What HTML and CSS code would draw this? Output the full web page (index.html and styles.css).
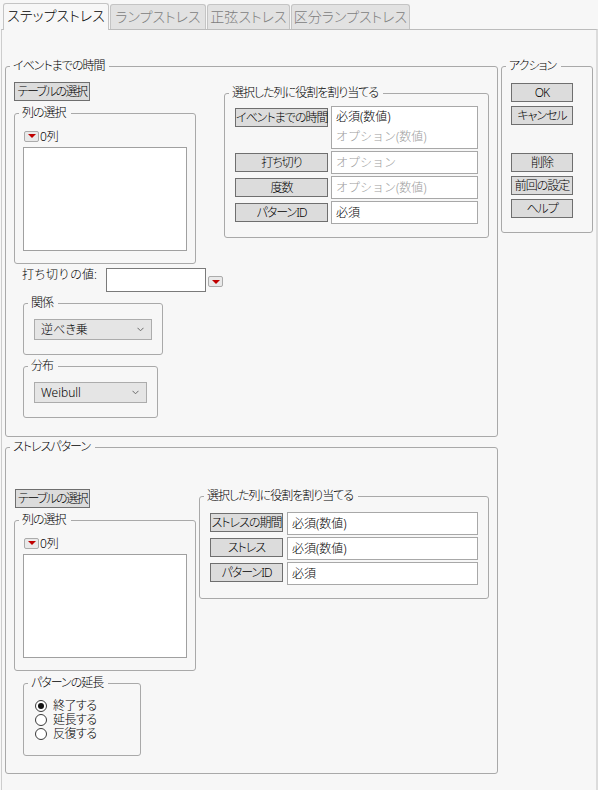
FILE: index.html
```html
<!DOCTYPE html>
<html lang="ja">
<head>
<meta charset="utf-8">
<title>ステップストレス</title>
<link rel="stylesheet" href="styles.css">
</head>
<body>
<div class="tabs">
  <div class="tab active t1">ステップストレス</div>
  <div class="tab t2">ランプストレス</div>
  <div class="tab t3">正弦ストレス</div>
  <div class="tab t4">区分ランプストレス</div>
</div>
<div class="panel">
  <div class="main">
    <fieldset class="group g1">
      <legend>イベントまでの時間</legend>
      <div class="gbody">
        <div class="leftcol lc1">
          <button class="btn btn-table">テーブルの選択</button>
          <fieldset class="group colsel">
            <legend>列の選択</legend>
            <div class="colcount"><span class="redbtn"></span><span>0列</span></div>
            <div class="listbox"></div>
          </fieldset>
          <div class="cutoff">
            <span class="cutoff-label">打ち切りの値:</span>
            <div class="textinput"></div>
            <span class="redbtn cutoff-btn"></span>
          </div>
          <fieldset class="group rel">
            <legend>関係</legend>
            <div class="select sel-rel"><span>逆べき乗</span><svg width="7" height="5" viewBox="0 0 7 5"><path d="M0.5 0.8 L3.5 3.8 L6.5 0.8" fill="none" stroke="#6a6a6a" stroke-width="1"/></svg></div>
          </fieldset>
          <fieldset class="group dist">
            <legend>分布</legend>
            <div class="select sel-dist"><span>Weibull</span><svg width="7" height="5" viewBox="0 0 7 5"><path d="M0.5 0.8 L3.5 3.8 L6.5 0.8" fill="none" stroke="#6a6a6a" stroke-width="1"/></svg></div>
          </fieldset>
        </div>
        <fieldset class="group roles r1">
          <legend>選択した列に役割を割り当てる</legend>
          <div class="rolegrid">
            <button class="btn role-btn">イベントまでの時間</button>
            <div class="role-val tall"><div>必須(数値)</div><div class="gray">オプション(数値)</div></div>
            <button class="btn role-btn">打ち切り</button>
            <div class="role-val gray">オプション</div>
            <button class="btn role-btn">度数</button>
            <div class="role-val gray">オプション(数値)</div>
            <button class="btn role-btn">パターンID</button>
            <div class="role-val">必須</div>
          </div>
        </fieldset>
      </div>
    </fieldset>

    <fieldset class="group g2">
      <legend>ストレスパターン</legend>
      <div class="gbody">
        <div class="leftcol lc2">
          <button class="btn btn-table btn-table2">テーブルの選択</button>
          <fieldset class="group colsel">
            <legend>列の選択</legend>
            <div class="colcount"><span class="redbtn"></span><span>0列</span></div>
            <div class="listbox"></div>
          </fieldset>
          <fieldset class="group pattern">
            <legend>パターンの延長</legend>
            <div class="radio-row"><span class="radio checked"></span><span class="radio-text">終了する</span></div>
            <div class="radio-row"><span class="radio"></span><span class="radio-text">延長する</span></div>
            <div class="radio-row"><span class="radio"></span><span class="radio-text">反復する</span></div>
          </fieldset>
        </div>
        <fieldset class="group roles r2">
          <legend>選択した列に役割を割り当てる</legend>
          <div class="rolegrid rolegrid2">
            <button class="btn role-btn">ストレスの期間</button>
            <div class="role-val">必須(数値)</div>
            <button class="btn role-btn">ストレス</button>
            <div class="role-val">必須(数値)</div>
            <button class="btn role-btn">パターンID</button>
            <div class="role-val">必須</div>
          </div>
        </fieldset>
      </div>
    </fieldset>
  </div>

  <fieldset class="group actions">
    <legend>アクション</legend>
    <button class="btn act-btn">OK</button>
    <button class="btn act-btn">キャンセル</button>
    <button class="btn act-btn act-gap">削除</button>
    <button class="btn act-btn">前回の設定</button>
    <button class="btn act-btn">ヘルプ</button>
  </fieldset>
</div>
</body>
</html>
```

FILE: styles.css
```css
* {
  box-sizing: border-box;
}

body {
  margin: 0;
  background: #f7f7f7;
  font-family: "Noto Sans", "Noto Sans CJK JP", sans-serif;
  font-size: 12px;
  font-weight: 300;
  color: #000;
  font-feature-settings: "palt";
}

/* Tabs */
.tabs {
  display: flex;
  align-items: flex-end;
  height: 29px;
  padding-left: 3px;
  gap: 1px;
}

.tab {
  height: 25px;
  border: 1px solid #c4c4c4;
  border-bottom: 0;
  border-radius: 3px 3px 0 0;
  background: #e2e2e2;
  color: #7d7d7d;
  font-size: 14px;
  line-height: 23px;
  text-align: center;
  white-space: nowrap;
}

.tab.active {
  height: 27px;
  margin-bottom: -1px;
  background: #f7f7f7;
  color: #000;
  position: relative;
  z-index: 1;
}

.t1 { width: 106px; }
.t2 { width: 96px; }
.t3 { width: 83px; }
.t4 { width: 119px; }

/* Panel */
.panel {
  display: flex;
  align-items: flex-start;
  gap: 3px;
  margin-left: 1px;
  height: 761px;
  padding: 29px 0 0 3px;
  border-top: 1px solid #bcbcbc;
  border-left: 1px solid #cdcdcd;
  border-right: 2px solid #dcdcdc;
}

.main {
  width: 493px;
  display: flex;
  flex-direction: column;
  gap: 3px;
}

/* Groups */
.group {
  --pl: 0px;
  margin: 0;
  padding: 0 0 0 var(--pl);
  min-width: 0;
  border: 1px solid #a9a9a9;
  border-radius: 3px;
}

.group > legend {
  margin-left: calc(4px - var(--pl));
  padding: 0 5px 0 3px;
  line-height: 14px;
  font-size: 12px;
  letter-spacing: -1px;
  white-space: nowrap;
}

.gbody {
  display: flex;
  align-items: flex-start;
}

.g1 {
  --pl: 8px;
  padding-right: 8px;
  padding-bottom: 18px;
}

.g2 {
  --pl: 8px;
  padding-right: 8px;
  padding-bottom: 17px;
}

.leftcol {
  display: flex;
  flex-direction: column;
  align-items: flex-start;
}

.lc1 { width: 210px; }
.lc2 { width: 185px; }

/* Buttons */
.btn {
  font: inherit;
  height: 19px;
  line-height: 17px;
  padding: 0;
  margin: 0;
  border: 1px solid #6f6f6f;
  background: #dcdcdc;
  color: #000;
  letter-spacing: -1px;
  white-space: nowrap;
  text-align: center;
}

.btn-table {
  margin-top: 9px;
  width: 76px;
  letter-spacing: -1.5px;
}

.btn-table2 {
  margin-top: 35px;
  margin-left: 1px;
  width: 75px;
}

/* Column select */
.colsel {
  --pl: 8px;
  width: 182px;
  margin-top: 5px;
  padding-right: 8px;
  padding-bottom: 12px;
}

.colcount {
  display: flex;
  align-items: center;
  gap: 1px;
  height: 14px;
  margin-top: 9px;
  padding-left: 1px;
}

.redbtn {
  display: inline-flex;
  align-items: center;
  justify-content: center;
  width: 15px;
  height: 11px;
  border: 1px solid #ababab;
  border-radius: 2px;
  background: #e9e9e9;
}

.redbtn::after {
  content: "";
  border-left: 4px solid transparent;
  border-right: 4px solid transparent;
  border-top: 4px solid #c00000;
}

.listbox {
  width: 164px;
  height: 104px;
  margin-top: 4px;
  background: #fff;
  border: 1px solid #a0a0a0;
}

/* Cutoff */
.cutoff {
  display: flex;
  align-items: flex-start;
  margin-top: 4px;
  padding-left: 8px;
}

.cutoff-label {
  width: 84px;
  line-height: 14px;
  font-feature-settings: normal;
  white-space: nowrap;
}

.textinput {
  width: 100px;
  height: 24px;
  background: #fff;
  border: 1px solid #7a7a7a;
}

.cutoff-btn {
  margin: 8px 0 0 2px;
}

/* Selects */
.rel {
  --pl: 10px;
  width: 140px;
  margin: 4px 0 0 9px;
  padding-bottom: 14px;
}

.dist {
  --pl: 10px;
  width: 135px;
  margin: 4px 0 0 9px;
  padding-bottom: 14px;
}

.select {
  display: flex;
  align-items: center;
  justify-content: space-between;
  height: 21px;
  margin-top: 9px;
  padding: 0 7px 0 6px;
  background: #e5e5e5;
  border: 1px solid #acacac;
  line-height: 19px;
}

.sel-rel { width: 118px; }
.sel-dist { width: 113px; }

/* Roles */
.roles {
  --pl: 10px;
  padding-top: 6px;
  padding-right: 10px;
  padding-bottom: 13px;
}

.r1 {
  width: 265px;
  margin-top: 13px;
}

.r2 {
  width: 290px;
  margin-top: 35px;
  padding-top: 9px;
}

.rolegrid {
  display: grid;
  grid-template-columns: 93px 147px;
  column-gap: 3px;
  row-gap: 2px;
}

.rolegrid2 {
  grid-template-columns: 73px 191px;
  column-gap: 4px;
}

.role-btn {
  width: 100%;
  align-self: start;
  margin-top: 2px;
}

.rolegrid2 .role-btn {
  margin-top: 1px;
}

.role-val {
  height: 23px;
  padding: 0 4px;
  line-height: 21px;
  background: #fff;
  border: 1px solid #a8a8a8;
  font-feature-settings: normal;
  white-space: nowrap;
}

.role-val.tall {
  height: 43px;
  line-height: 20px;
}

.gray {
  color: #9c9c9c;
}

/* Pattern radios */
.pattern {
  --pl: 11px;
  width: 118px;
  margin: 5px 0 0 9px;
  padding-top: 9px;
  padding-bottom: 14px;
}

.radio-row {
  display: flex;
  align-items: center;
  gap: 6px;
  height: 14px;
}

.radio-text {
  display: block;
  height: 14px;
  font-size: 12px;
  line-height: 14px;
  letter-spacing: -0.5px;
}

.radio {
  position: relative;
  width: 12px;
  height: 12px;
  border: 1px solid #3a3a3a;
  border-radius: 50%;
  background: #fff;
}

.radio.checked::after {
  content: "";
  position: absolute;
  left: 2px;
  top: 2px;
  width: 6px;
  height: 6px;
  border-radius: 50%;
  background: #111;
}

/* Actions */
.actions {
  --pl: 9px;
  width: 92px;
  display: flex;
  flex-direction: column;
  gap: 4px;
  padding-top: 10px;
  padding-bottom: 14px;
}

.act-btn {
  width: 62px;
}

.act-gap {
  margin-top: 24px;
}
```
